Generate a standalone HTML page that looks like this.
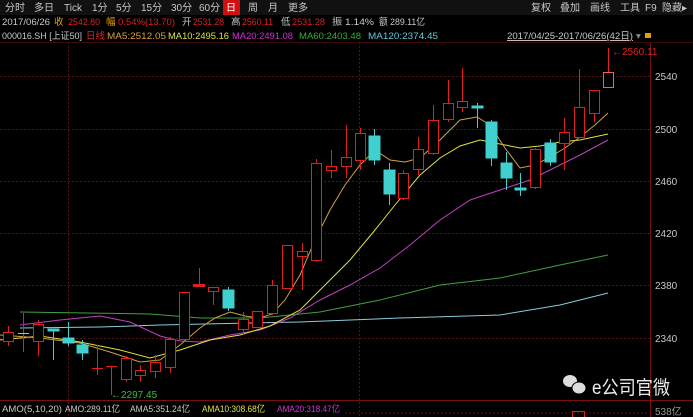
<!DOCTYPE html>
<html><head><meta charset="utf-8"><style>
body{margin:0;width:693px;height:417px;background:#000;overflow:hidden;font-family:"Liberation Sans","Noto Sans CJK SC",sans-serif;}
svg{position:absolute;left:0;top:0}
text{font-family:"Liberation Sans","Noto Sans CJK SC",sans-serif}
</style></head><body>
<svg width="693" height="417" xmlns="http://www.w3.org/2000/svg" font-size="10">
<rect x="0" y="0" width="693" height="15" fill="#111"/>
<rect x="223" y="0" width="17" height="15" fill="#d01010"/>
<g fill="#c8c8c8">
<text x="5" y="11">分时</text><text x="34" y="11">多日</text><text x="64" y="11">Tick</text><text x="92" y="11">1分</text><text x="116" y="11">5分</text><text x="141" y="11">15分</text><text x="171" y="11">30分</text><text x="199" y="11">60分</text>
<text x="226" y="11" fill="#fff">日</text><text x="248" y="11">周</text><text x="268" y="11">月</text><text x="288" y="11">更多</text>
<text x="531" y="11">复权</text><text x="560" y="11">叠加</text><text x="590" y="11">画线</text><text x="620" y="11">工具</text><text x="645" y="11">F9</text><text x="662" y="11">隐藏▸</text>
</g>
<g font-size="9.5">
<text x="2" y="25" fill="#c8c8c8" textLength="48" lengthAdjust="spacingAndGlyphs">2017/06/26</text>
<text x="54" y="25" fill="#e0a000">收</text><text x="68" y="25" fill="#e02020" textLength="32" lengthAdjust="spacingAndGlyphs">2542.80</text>
<text x="106" y="25" fill="#e0a000">幅</text><text x="118" y="25" fill="#e02020" textLength="57" lengthAdjust="spacingAndGlyphs">0.54%(13.70)</text>
<text x="182" y="25" fill="#c8c8c8">开</text><text x="193" y="25" fill="#e02020" textLength="31" lengthAdjust="spacingAndGlyphs">2531.28</text>
<text x="231" y="25" fill="#c8c8c8">高</text><text x="242" y="25" fill="#e02020" textLength="31" lengthAdjust="spacingAndGlyphs">2560.11</text>
<text x="281" y="25" fill="#c8c8c8">低</text><text x="292" y="25" fill="#e02020" textLength="33" lengthAdjust="spacingAndGlyphs">2531.28</text>
<text x="332" y="25" fill="#c8c8c8" textLength="42" lengthAdjust="spacingAndGlyphs">振 1.14%</text><text x="379" y="25" fill="#c8c8c8" textLength="46" lengthAdjust="spacingAndGlyphs">额 289.11亿</text>
<text x="2" y="39" fill="#c8c8c8" textLength="80" lengthAdjust="spacingAndGlyphs">000016.SH [上证50]</text><text x="86" y="39" fill="#e02020">日线</text>
<text x="107" y="39" fill="#e0a030" textLength="59" lengthAdjust="spacingAndGlyphs">MA5:2512.05</text><text x="168" y="39" fill="#e0e040" textLength="61" lengthAdjust="spacingAndGlyphs">MA10:2495.16</text>
<text x="232" y="39" fill="#d030d0" textLength="61" lengthAdjust="spacingAndGlyphs">MA20:2491.08</text><text x="299" y="39" fill="#30b030" textLength="62" lengthAdjust="spacingAndGlyphs">MA60:2403.48</text>
<text x="368" y="39" fill="#60c8d8" textLength="70" lengthAdjust="spacingAndGlyphs">MA120:2374.45</text>
<text x="507" y="39" fill="#c8c8c8" text-decoration="underline" textLength="126" lengthAdjust="spacingAndGlyphs">2017/04/25-2017/06/26(42日)</text>
<text x="636" y="39" fill="#888">▾</text><rect x="645" y="33" width="6" height="5" fill="#e0a000"/>
</g>
<g stroke="#5a1010" stroke-dasharray="2,2" stroke-width="1">
<line x1="0" y1="76.5" x2="650" y2="76.5"/><line x1="0" y1="129.5" x2="650" y2="129.5"/><line x1="0" y1="181.5" x2="650" y2="181.5"/><line x1="0" y1="233.5" x2="650" y2="233.5"/><line x1="0" y1="285.5" x2="650" y2="285.5"/><line x1="0" y1="338.5" x2="650" y2="338.5"/>
<line x1="68.5" y1="42" x2="68.5" y2="417"/><line x1="359.5" y1="42" x2="359.5" y2="417"/>
</g>
<line x1="650.5" y1="42" x2="650.5" y2="417" stroke="#7a1010"/>
<line x1="0" y1="400.5" x2="693" y2="400.5" stroke="#7a1010"/>
<line x1="0" y1="42.5" x2="693" y2="42.5" stroke="#3a0a0a"/>
<g fill="#c8c8c8"><text x="655" y="80">2540</text><text x="655" y="133">2500</text><text x="655" y="185">2460</text><text x="655" y="237">2420</text><text x="655" y="289">2380</text><text x="655" y="342">2340</text><text x="655" y="415" fill="#999">538亿</text></g>
<g fill="none" stroke-width="1">
<polyline stroke="#40a040" points="20,312 150,314 200,318 260,318 320,312 380,300 440,285 500,278 560,265 608,255"/>
<polyline stroke="#88ccdd" points="20,328 100,327 160,325 250,323 300,322 400,318 500,315 560,305 608,293"/>
<polyline stroke="#c040c0" points="20,325 60,320 100,316 130,322 160,336 180,341 200,342 230,335 260,330 290,318 320,300 350,285 380,268 410,245 440,220 470,200 500,190 530,180 560,165 580,155 608,140"/>
<polyline stroke="#e0e040" points="0,340 40,336 80,342 120,350 150,358 180,350 210,340 240,335 270,326 300,310 320,290 350,260 375,230 395,205 420,175 440,158 460,146 480,140 500,144 520,148 540,146 560,142 580,140 608,134"/>
<polyline stroke="#d0a040" points="0,335 40,338 80,343 110,352 140,362 160,360 180,345 200,328 215,318 230,312 245,316 260,318 272,314 285,300 300,275 315,240 330,210 345,185 360,165 375,150 390,160 405,162 420,158 440,140 460,120 477,117 490,125 505,148 520,168 535,165 550,157 565,148 580,137 595,125 608,113"/>
</g>
<g stroke="#e02020" fill="#000" stroke-width="1">
<line x1="8.5" y1="326" x2="8.5" y2="346"/><rect x="3.5" y="332.5" width="10" height="9"/>
<line x1="23.5" y1="313" x2="23.5" y2="352"/><line x1="18" y1="333.5" x2="29" y2="333.5" stroke="#88ccdd"/>
<line x1="38.5" y1="320" x2="38.5" y2="356"/><rect x="33.5" y="324.5" width="10" height="17"/>
<line x1="97.5" y1="345" x2="97.5" y2="375"/><line x1="92" y1="368.5" x2="103" y2="368.5"/>
<line x1="111.5" y1="366" x2="111.5" y2="395"/><line x1="106" y1="366.5" x2="117" y2="366.5"/>
<line x1="126.5" y1="356" x2="126.5" y2="382"/><rect x="121.5" y="358.5" width="10" height="21"/>
<line x1="140.5" y1="365" x2="140.5" y2="382"/><rect x="135.5" y="370.5" width="10" height="5"/>
<line x1="155.5" y1="355" x2="155.5" y2="378"/><rect x="150.5" y="362.5" width="10" height="9"/>
<line x1="170.5" y1="337" x2="170.5" y2="373"/><rect x="165.5" y="339.5" width="10" height="28"/>
<rect x="179.5" y="292.5" width="10" height="47"/>
<line x1="199.5" y1="268" x2="199.5" y2="285"/><rect x="193.5" y="284.5" width="11" height="2" fill="#e02020"/>
<line x1="213.5" y1="287" x2="213.5" y2="305"/><rect x="208.5" y="287.5" width="10" height="4"/>
<line x1="243.5" y1="312" x2="243.5" y2="335"/><rect x="238.5" y="319.5" width="10" height="10"/>
<rect x="252.5" y="311.5" width="10" height="16"/>
<line x1="272.5" y1="280" x2="272.5" y2="315"/><rect x="267.5" y="285.5" width="10" height="28"/>
<rect x="282.5" y="245.5" width="10" height="43"/>
<line x1="302.5" y1="243" x2="302.5" y2="290"/><rect x="297.5" y="251.5" width="10" height="5"/>
<line x1="316.5" y1="159" x2="316.5" y2="262"/><rect x="311.5" y="163.5" width="10" height="97"/>
<line x1="331.5" y1="150" x2="331.5" y2="178"/><rect x="326.5" y="166.5" width="10" height="4"/>
<line x1="346.5" y1="125" x2="346.5" y2="178"/><rect x="341.5" y="157.5" width="10" height="9"/>
<line x1="360.5" y1="128" x2="360.5" y2="170"/><rect x="355.5" y="133.5" width="10" height="27"/>
<line x1="403.5" y1="170" x2="403.5" y2="200"/><rect x="398.5" y="173.5" width="10" height="25"/>
<line x1="418.5" y1="137" x2="418.5" y2="175"/><rect x="413.5" y="149.5" width="10" height="20"/>
<line x1="433.5" y1="105" x2="433.5" y2="155"/><rect x="428.5" y="120.5" width="10" height="33"/>
<line x1="448.5" y1="80" x2="448.5" y2="122"/><rect x="443.5" y="103.5" width="10" height="16"/>
<line x1="462.5" y1="68" x2="462.5" y2="112"/><rect x="457.5" y="101.5" width="10" height="6"/>
<line x1="535.5" y1="148" x2="535.5" y2="189"/><rect x="530.5" y="149.5" width="10" height="38"/>
<line x1="564.5" y1="118" x2="564.5" y2="170"/><rect x="559.5" y="132.5" width="10" height="11"/>
<line x1="579.5" y1="69" x2="579.5" y2="137"/><rect x="574.5" y="107.5" width="10" height="30"/>
<line x1="594.5" y1="90" x2="594.5" y2="122"/><rect x="589.5" y="90.5" width="10" height="23"/>
<line x1="608.5" y1="48" x2="608.5" y2="72"/><rect x="603.5" y="72.5" width="10" height="15" stroke="#f06060"/>
</g>
<g fill="#40d0d0" stroke="#40d0d0">
<line x1="53.5" y1="329" x2="53.5" y2="360"/><rect x="48" y="329" width="11" height="2"/>
<line x1="68.5" y1="322" x2="68.5" y2="346"/><rect x="63" y="338" width="11" height="5"/>
<line x1="82.5" y1="340" x2="82.5" y2="360"/><rect x="77" y="345" width="11" height="8"/>
<line x1="228.5" y1="287" x2="228.5" y2="311"/><rect x="223" y="290" width="11" height="18"/>
<line x1="374.5" y1="129" x2="374.5" y2="165"/><rect x="369" y="136" width="11" height="24"/>
<line x1="389.5" y1="163" x2="389.5" y2="205"/><rect x="384" y="170" width="11" height="24"/>
<line x1="477.5" y1="103" x2="477.5" y2="128"/><rect x="472" y="106" width="11" height="2"/>
<line x1="491.5" y1="120" x2="491.5" y2="166"/><rect x="486" y="122" width="11" height="36"/>
<line x1="506.5" y1="152" x2="506.5" y2="190"/><rect x="501" y="163" width="11" height="15"/>
<line x1="520.5" y1="173" x2="520.5" y2="196"/><rect x="515" y="188" width="11" height="2"/>
<line x1="550.5" y1="139" x2="550.5" y2="166"/><rect x="545" y="143" width="11" height="19"/>
</g>
<text x="612" y="55" fill="#e02020">←2560.11</text>
<text x="111" y="398" fill="#30c030">←2297.45</text>
<g font-size="9.5">
<text x="2" y="412" fill="#c8c8c8" textLength="60" lengthAdjust="spacingAndGlyphs">AMO(5,10,20)</text><text x="65" y="412" fill="#c8c8c8" textLength="55" lengthAdjust="spacingAndGlyphs">AMO:289.11亿</text>
<text x="130" y="412" fill="#c8c8c8" textLength="60" lengthAdjust="spacingAndGlyphs">AMA5:351.24亿</text><text x="202" y="412" fill="#e0e040" textLength="63" lengthAdjust="spacingAndGlyphs">AMA10:308.68亿</text>
<text x="277" y="412" fill="#d030d0" textLength="63" lengthAdjust="spacingAndGlyphs">AMA20:318.47亿</text>
</g>
<line x1="345" y1="413" x2="650" y2="413" stroke="#5a1010" stroke-dasharray="2,2"/>
<rect x="572.5" y="411.5" width="12" height="8" fill="none" stroke="#e02020"/>
<ellipse cx="570" cy="381" rx="7" ry="6" fill="#ddd"/><ellipse cx="579" cy="388" rx="7" ry="6" fill="#ddd" stroke="#000"/>
<text x="592" y="394" style="font-size:19px" fill="#eee" textLength="78" lengthAdjust="spacingAndGlyphs">e公司官微</text>
</svg>
</body></html>
